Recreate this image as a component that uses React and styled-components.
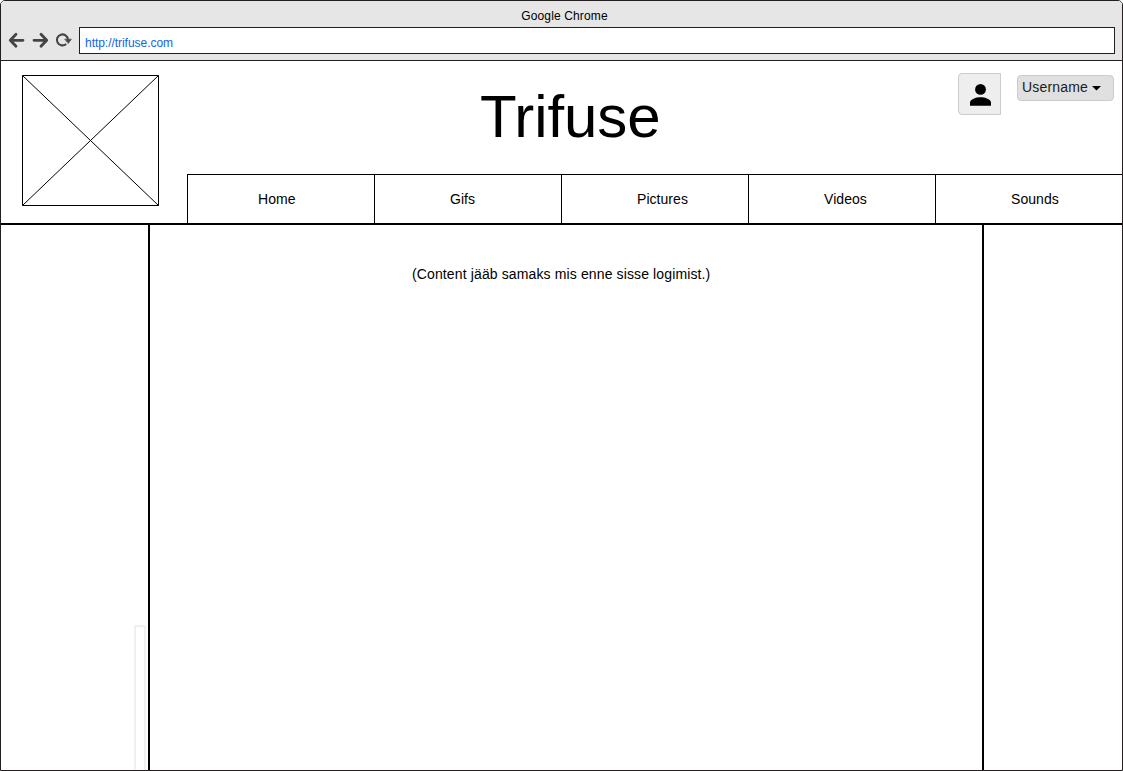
import React from 'react';
import styled, { createGlobalStyle } from 'styled-components';

const GlobalStyle = createGlobalStyle`
  *, *::before, *::after { box-sizing: border-box; }
  body {
    margin: 0;
    background: #fff;
    color: #000;
    font: 14px/16px "Liberation Sans", Arial, sans-serif;
    overflow: hidden;
  }
`;

const BrowserWindow = styled.div`
  display: flex;
  flex-direction: column;
  height: 100vh;
  border: 1px solid #231f20;
  border-radius: 5px 5px 0 0;
  overflow: hidden;
`;

const Chrome = styled.div`
  flex: none;
  height: 60px;
  background: #e6e6e6;
  border-bottom: 1px solid #231f20;
`;

const WindowTitle = styled.div`
  height: 26px;
  padding: 7px 0 0 6px;
  text-align: center;
  font-size: 12px;
  line-height: 16px;
  letter-spacing: 0.14px;
`;

const Toolbar = styled.div`
  display: flex;
  align-items: center;
  height: 27px;
  padding: 0 7px;
`;

const Controls = styled.svg`
  flex: none;
  width: 71px;
  height: 27px;
`;

const AddressBar = styled.div`
  flex: 1;
  height: 27px;
  padding: 7px 5px 0;
  border: 1px solid #231f20;
  background: #fff;
  color: #0d65e5;
  font-size: 12px;
  line-height: 16px;
  letter-spacing: -0.04px;
`;

const Header = styled.header`
  flex: none;
  display: flex;
  height: 164px;
  border-bottom: 2px solid #000;
`;

const Logo = styled.svg`
  flex: none;
  width: 137px;
  height: 131px;
  margin: 14px 28px 0 21px;
`;

const HeaderMain = styled.div`
  flex: 1;
  display: flex;
  flex-direction: column;
`;

const Banner = styled.div`
  display: flex;
  height: 113px;
`;

const SiteTitle = styled.h1`
  flex: 1;
  margin: 21px 0 0 293px;
  font-size: 60px;
  font-weight: 400;
  line-height: 69px;
  letter-spacing: -0.1px;
`;

const Avatar = styled.div`
  flex: none;
  display: flex;
  width: 43px;
  height: 42px;
  margin: 12px 16px 0 0;
  border: 1px solid #ccc;
  border-radius: 4px 0 0 4px;
  background: #eee;
`;

const UserMenu = styled.div`
  flex: none;
  display: flex;
  width: 97px;
  height: 26px;
  margin: 14px 8px 0 0;
  padding: 3px 0 0 4px;
  border: 1px solid #ccc;
  border-radius: 4px;
  background: #e0e0e0;
  color: #1c1c1c;
  letter-spacing: 0.17px;
`;

const Caret = styled.svg`
  width: 9px;
  height: 5px;
  margin: 7px 0 0 4px;
`;

const Nav = styled.nav`
  display: grid;
  grid-template-columns: repeat(5, 187px);
  height: 49px;
  border-top: 1px solid #000;
`;

const NavItem = styled.div`
  padding: 16px 0 0 ${({ $indent }) => $indent}px;
  border-left: 1px solid #000;
  letter-spacing: 0.05px;
`;

const Columns = styled.div`
  flex: 1;
  display: grid;
  grid-template-columns: 147px 836px 1fr;
`;

const LeftColumn = styled.aside`
  display: flex;
  justify-content: flex-end;
  align-items: flex-end;
  padding-right: 2px;
`;

const ScrollTrack = styled.div`
  width: 12px;
  height: 145px;
  border: 2px solid #f0f0f0;
  border-bottom: 0;
  border-radius: 2px 2px 0 0;
`;

const Content = styled.main`
  padding: 41px 0 0 262px;
  border-left: 2px solid #000;
  border-right: 2px solid #000;
  letter-spacing: 0.127px;
`;

const navItems = [
  { label: 'Home', indent: 70 },
  { label: 'Gifs', indent: 75 },
  { label: 'Pictures', indent: 75 },
  { label: 'Videos', indent: 75 },
  { label: 'Sounds', indent: 75 },
];

export default function App() {
  return (
    <>
      <GlobalStyle />
      <BrowserWindow>
        <Chrome>
          <WindowTitle>Google Chrome</WindowTitle>
          <Toolbar>
            <Controls viewBox="0 0 71 27" fill="none" stroke="#444" strokeLinecap="round" strokeLinejoin="round">
              <path d="M15 13.3H3M8 7.3L2.3 13.3L8 19.3" strokeWidth="2.8" />
              <path d="M26 13.3H38M33 7.3L38.7 13.3L33 19.3" strokeWidth="2.8" />
              <path d="M58.2 16.9A5.5 5.5 0 1 1 59.9 12.5" strokeWidth="2.1" strokeLinecap="butt" />
              <path d="M57 12.2H63.4L60.4 16.3Z" fill="#444" strokeWidth="0.6" />
            </Controls>
            <AddressBar>http://trifuse.com</AddressBar>
          </Toolbar>
        </Chrome>
        <Header>
          <Logo viewBox="0 0 137 131" fill="none" stroke="#000">
            <path d="M0.5 0.5H136.5V130.5H0.5ZM0.5 0.5L136.5 130.5M136.5 0.5L0.5 130.5" />
          </Logo>
          <HeaderMain>
            <Banner>
              <SiteTitle>Trifuse</SiteTitle>
              <Avatar>
                <svg width="41" height="40" viewBox="0 0 41 40">
                  <circle cx="21.5" cy="15.4" r="5.4" />
                  <path d="M11 31.8V28.5C11 25.2 17 23.2 21.5 23.2S32 25.2 32 28.5V31.8Z" />
                </svg>
              </Avatar>
              <UserMenu>
                Username
                <Caret viewBox="0 0 9 5"><path d="M0 0H9L4.5 4.5Z" /></Caret>
              </UserMenu>
            </Banner>
            <Nav>
              {navItems.map(({ label, indent }) => (
                <NavItem key={label} $indent={indent}>{label}</NavItem>
              ))}
            </Nav>
          </HeaderMain>
        </Header>
        <Columns>
          <LeftColumn><ScrollTrack /></LeftColumn>
          <Content>(Content jääb samaks mis enne sisse logimist.)</Content>
          <aside />
        </Columns>
      </BrowserWindow>
    </>
  );
}
